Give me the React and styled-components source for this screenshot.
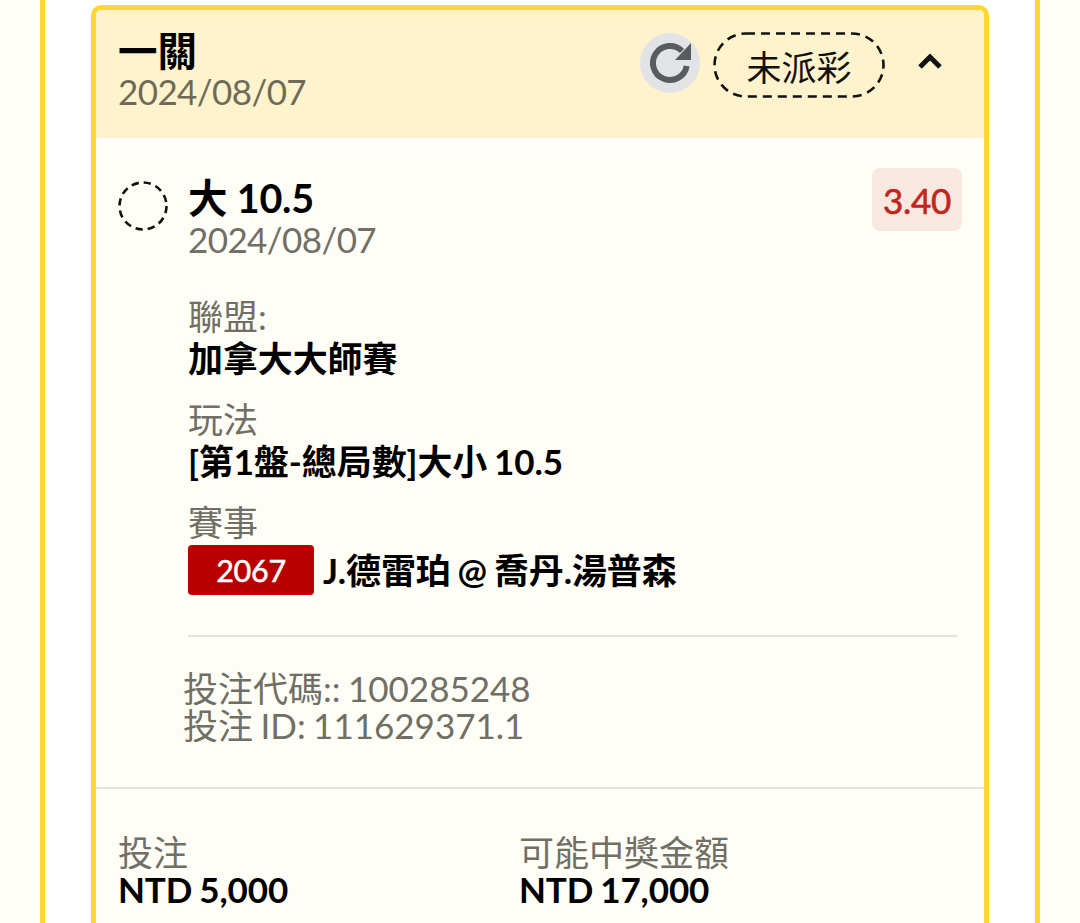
import React from "react";
import styled, { createGlobalStyle } from "styled-components";

const GlobalStyle = createGlobalStyle`
  html, body {
    margin: 0;
    padding: 0;
    height: 923px;
    overflow: hidden;
    background: #fffef6;
  }
  body {
    font-family: Lato, "Noto Sans CJK TC", sans-serif;
  }
`;

const Page = styled.div`
  height: 923px;
  padding: 0 40px;
  box-sizing: border-box;
  overflow: hidden;
  background: #fffef6;
`;

const Panel = styled.div`
  height: 100%;
  box-sizing: border-box;
  background: #ffffff;
  border-left: 5px solid #fdd835;
  border-right: 5px solid #fdd835;
  padding: 5px 46px 0;
`;

const Card = styled.div`
  border: 5px solid #fdd835;
  border-bottom: none;
  border-radius: 10px 10px 0 0;
  background: #fffef6;
  height: 920px;
  box-sizing: border-box;
`;

const CardHeader = styled.div`
  height: 128px;
  box-sizing: border-box;
  background: #fff3cd;
  border-radius: 5px 5px 0 0;
  padding: 20px 38px 0 22px;
  display: flex;
  justify-content: space-between;
`;

const HeaderTitle = styled.div`
  font-size: 39.5px;
  font-weight: 700;
  line-height: 41px;
  color: #000;
`;

const DateText = styled.div`
  font-size: 35px;
  line-height: 40px;
  letter-spacing: -0.6px;
  color: ${(p) => p.$color || "#6f6f66"};
`;

const HeaderActions = styled.div`
  display: flex;
  align-items: flex-start;
  padding-top: 3px;
`;

const RefreshButton = styled.div`
  width: 60px;
  height: 60px;
  border-radius: 50%;
  background: #e2e3e5;
  margin-right: 13px;
  svg {
    display: block;
  }
`;

const StatusPill = styled.div`
  position: relative;
  width: 172px;
  height: 66px;
  display: flex;
  align-items: center;
  justify-content: center;
  font-size: 35px;
  color: #111;
  margin-top: -1px;
`;

const PillOutline = styled.svg`
  position: absolute;
  inset: 0;
`;

const Chevron = styled.div`
  width: 32px;
  margin-left: 29px;
  padding-top: 19px;
  display: flex;
  justify-content: center;
`;

const LegSection = styled.div`
  padding: 30px 22px 0 22px;
`;

const LegHead = styled.div`
  display: flex;
  align-items: flex-start;
`;

const DashedCircle = styled.svg`
  display: block;
  margin-top: 13px;
  margin-right: 20px;
  flex: none;
`;

const LegTitles = styled.div`
  flex: 1;
`;

const LegTitle = styled.div`
  font-size: 39.5px;
  font-weight: 700;
  line-height: 43px;
  letter-spacing: -0.2px;
  color: #000;
  padding-top: 8px;
`;

const OddsBadge = styled.div`
  width: 90px;
  height: 63px;
  border-radius: 8px;
  background: #f8e8e0;
  color: #c0261e;
  font-size: 35px;
  letter-spacing: -0.3px;
  -webkit-text-stroke: 0.6px #c0261e;
  display: flex;
  align-items: center;
  justify-content: center;
`;

const LegBody = styled.div`
  padding-left: 70px;
  margin-top: 37px;
`;

const InfoBlock = styled.div`
  margin-bottom: 20px;
`;

const Label = styled.div`
  font-size: 35px;
  line-height: 41px;
  color: #6f6f66;
`;

const Value = styled.div`
  font-size: 35px;
  line-height: 42px;
  font-weight: 700;
  letter-spacing: -0.1px;
  word-spacing: -1.5px;
  color: #000;
`;

const MatchRow = styled.div`
  display: flex;
  align-items: center;
  gap: 9px;
  margin-top: 2px;
`;

const MatchCode = styled.div`
  width: 126px;
  height: 50px;
  border-radius: 4px;
  background: #b80000;
  color: #fff;
  font-size: 30.5px;
  letter-spacing: -0.3px;
  -webkit-text-stroke: 0.5px #fff;
  display: flex;
  align-items: center;
  justify-content: center;
`;

const InnerRule = styled.hr`
  border: none;
  border-top: 2.5px solid #e4e4de;
  margin: 40px 5px 0 70px;
`;

const BetIds = styled.div`
  padding-left: 65px;
  margin-top: 33px;
  font-size: 35px;
  line-height: 37px;
  word-spacing: -1.5px;
  color: #6f6f66;
`;

const OuterRule = styled.hr`
  border: none;
  border-top: 2.5px solid #e4e4de;
  margin: 43px 0 0;
`;

const Totals = styled.div`
  display: grid;
  grid-template-columns: 401px 1fr;
  padding: 43px 22px 0;
`;

const TotalValue = styled.div`
  font-size: 35px;
  line-height: 36px;
  margin-top: -2px;
  font-weight: 700;
  letter-spacing: -0.1px;
  word-spacing: -1.5px;
  color: #000;
`;

const App = () => (
  <React.Fragment>
    <GlobalStyle />
    <Page>
      <Panel>
        <Card>
          <CardHeader>
            <div>
              <HeaderTitle>一關</HeaderTitle>
              <DateText $color="#6f6a58">2024/08/07</DateText>
            </div>
            <HeaderActions>
              <RefreshButton>
                <svg width="60" height="60" viewBox="0 0 60 60">
                  <path
                    d="M46.7 33A17 17 0 1 1 42 18"
                    fill="none"
                    stroke="#5a5b5e"
                    strokeWidth="6"
                  />
                  <path d="M51 10v17H35z" fill="#5a5b5e" />
                </svg>
              </RefreshButton>
              <StatusPill>
                <PillOutline width="172" height="66" viewBox="0 0 172 66">
                  <rect
                    x="1.5"
                    y="1.5"
                    width="169"
                    height="63"
                    rx="31.5"
                    fill="none"
                    stroke="#111"
                    strokeWidth="2.6"
                    strokeDasharray="9 6"
                  />
                </PillOutline>
                未派彩
              </StatusPill>
              <Chevron>
                <svg width="26" height="18" viewBox="0 0 26 18">
                  <path
                    d="M3 15 13 5l10 10"
                    fill="none"
                    stroke="#111"
                    strokeWidth="5"
                  />
                </svg>
              </Chevron>
            </HeaderActions>
          </CardHeader>
          <LegSection>
            <LegHead>
              <DashedCircle width="50" height="50" viewBox="0 0 50 50">
                <circle
                  cx="25"
                  cy="25"
                  r="23.5"
                  fill="none"
                  stroke="#111"
                  strokeWidth="2.6"
                  strokeDasharray="7.3 5"
                />
              </DashedCircle>
              <LegTitles>
                <LegTitle>大 10.5</LegTitle>
                <DateText>2024/08/07</DateText>
              </LegTitles>
              <OddsBadge>3.40</OddsBadge>
            </LegHead>
            <LegBody>
              <InfoBlock>
                <Label>聯盟:</Label>
                <Value>加拿大大師賽</Value>
              </InfoBlock>
              <InfoBlock>
                <Label>玩法</Label>
                <Value>[第1盤-總局數]大小 10.5</Value>
              </InfoBlock>
              <div>
                <Label>賽事</Label>
                <MatchRow>
                  <MatchCode>2067</MatchCode>
                  <Value>J.德雷珀 @ 喬丹.湯普森</Value>
                </MatchRow>
              </div>
            </LegBody>
            <InnerRule />
            <BetIds>
              <div>投注代碼:: 100285248</div>
              <div>投注 ID: 111629371.1</div>
            </BetIds>
          </LegSection>
          <OuterRule />
          <Totals>
            <div>
              <Label>投注</Label>
              <TotalValue>NTD 5,000</TotalValue>
            </div>
            <div>
              <Label>可能中獎金額</Label>
              <TotalValue>NTD 17,000</TotalValue>
            </div>
          </Totals>
        </Card>
      </Panel>
    </Page>
  </React.Fragment>
);

export default App;
